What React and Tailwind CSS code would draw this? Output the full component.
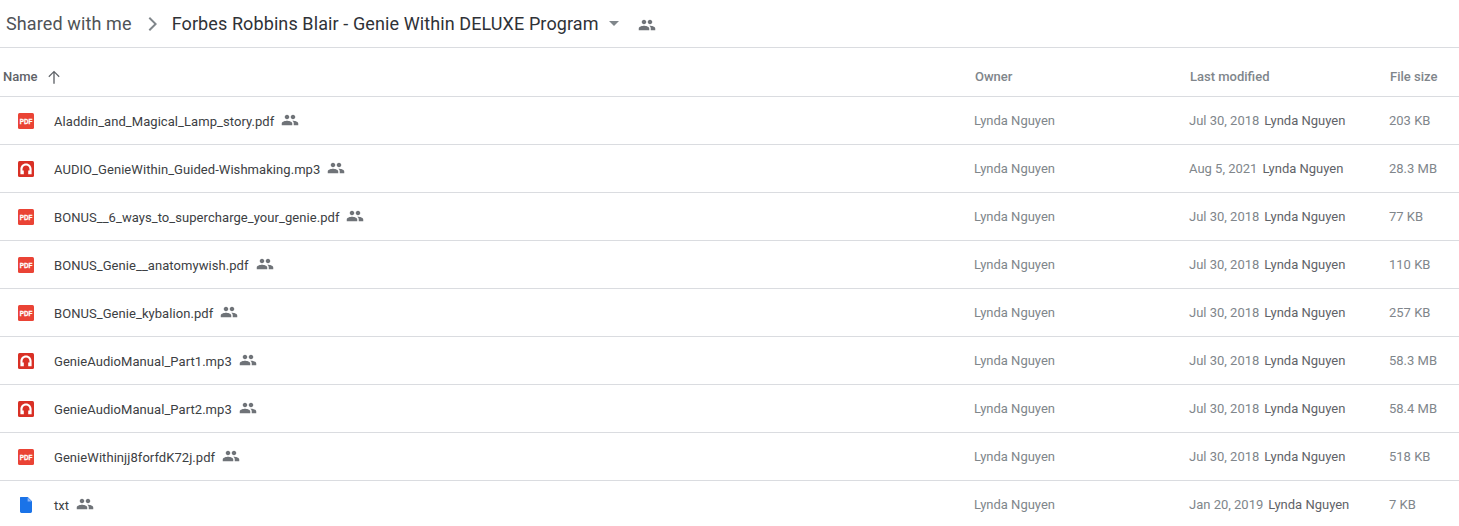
const PEOPLE = "M16 11c1.66 0 2.99-1.34 2.99-3S17.66 5 16 5s-3 1.34-3 3 1.34 3 3 3zm-8 0c1.66 0 2.99-1.34 2.99-3S9.66 5 8 5 5 6.34 5 8s1.34 3 3 3zm0 2c-2.33 0-7 1.17-7 3.5V19h14v-2.5C15 14.17 10.33 13 8 13zm8 0c-.29 0-.62.02-.97.05 1.16.84 1.97 1.97 1.97 3.45V19h6v-2.5c0-2.33-4.67-3.5-7-3.5z";

function People({ className = "" }) {
  return (
    <svg viewBox="0 0 24 24" className={`w-[18px] h-[18px] shrink-0 fill-[#6f7378] ${className}`}>
      <path d={PEOPLE} />
    </svg>
  );
}

function PdfIcon() {
  return (
    <svg viewBox="0 0 16 16" className="w-4 h-4 overflow-visible">
      <rect width="16" height="16" rx="1.5" fill="#ea4335" />
      <text x="8" y="10.700" textAnchor="middle" textLength="12.500" lengthAdjust="spacingAndGlyphs" fontFamily="Liberation Sans, sans-serif" fontWeight="700" fontSize="7.500" stroke="#fff" strokeWidth="0.3" fill="#fff">PDF</text>
    </svg>
  );
}

function AudioIcon() {
  return (
    <svg viewBox="0 0 16 16" className="w-4 h-4">
      <rect width="16" height="16" rx="1.5" fill="#d93025" />
      <path d="M8 2.400C4.800 2.400 2.400 4.800 2.400 8.200V13.200H5.800V9.400H4.500V8.200C4.500 6 6 4.500 8 4.500s3.500 1.500 3.500 3.700v1.200H10.200v3.800h3.400V8.200C13.600 4.800 11.200 2.400 8 2.400z" fill="#fff" />
    </svg>
  );
}

function DocIcon() {
  return (
    <svg viewBox="0 0 16 16" className="w-4 h-4">
      <path d="M2.500 0H9.800L14 4.200V14.600A1.400 1.400 0 0 1 12.600 16H3.400A1.400 1.400 0 0 1 2 14.600V0.800A.8.8 0 0 1 2.500 0Z" fill="#1a73e8" />
      <path d="M9.600 0.400V4.400H13.600Z" fill="#8ab4f8" />
    </svg>
  );
}

const ICONS = { pdf: PdfIcon, audio: AudioIcon, doc: DocIcon };

const FILES = [
  ["pdf", "Aladdin_and_Magical_Lamp_story.pdf", "Jul 30, 2018", "203 KB"],
  ["audio", "AUDIO_GenieWithin_Guided-Wishmaking.mp3", "Aug 5, 2021", "28.3 MB"],
  ["pdf", "BONUS__6_ways_to_supercharge_your_genie.pdf", "Jul 30, 2018", "77 KB"],
  ["pdf", "BONUS_Genie__anatomywish.pdf", "Jul 30, 2018", "110 KB"],
  ["pdf", "BONUS_Genie_kybalion.pdf", "Jul 30, 2018", "257 KB"],
  ["audio", "GenieAudioManual_Part1.mp3", "Jul 30, 2018", "58.3 MB"],
  ["audio", "GenieAudioManual_Part2.mp3", "Jul 30, 2018", "58.4 MB"],
  ["pdf", "GenieWithinjj8forfdK72j.pdf", "Jul 30, 2018", "518 KB"],
  ["doc", "txt", "Jan 20, 2019", "7 KB"],
];

function Row({ kind, name, date, size }) {
  const Icon = ICONS[kind];
  return (
    <div className="flex items-center h-12 border-b border-[#dadce0] text-[13px] shrink-0">
      <div className="w-[974px] flex items-center shrink-0">
        <div className="w-[54px] pl-[18px] flex items-center">
          <Icon />
        </div>
        <span className="mt-[2px] text-[#3c4043] tracking-[0.06px]">{name}</span>
        <People className="ml-[7px] -mt-px" />
      </div>
      <div className="w-[215px] shrink-0 text-[#80868b]">Lynda Nguyen</div>
      <div className="w-[200px] shrink-0 flex gap-[5px]">
        <span className="text-[#80868b]">{date}</span>
        <span className="text-[#5f6368]">Lynda Nguyen</span>
      </div>
      <div className="text-[#80868b]">{size}</div>
    </div>
  );
}

export default function App() {
  return (
    <div className="h-[526px] w-[1459px] overflow-hidden bg-white font-['Roboto',sans-serif]">
      <div className="h-12 flex items-center border-b border-[#dadce0] pl-[6px]">
        <span className="text-[18px] tracking-[0.12px] text-[#4f5357]">Shared with me</span>
        <svg viewBox="0 0 24 24" className="w-6 h-6 ml-2 fill-[#80868b]">
          <path d="M8.600 6.400 10 5l7 7-7 7-1.400-1.400L14.200 12z" />
        </svg>
        <span className="ml-[8px] text-[18px] tracking-[0.1px] text-[#2f3237]">Forbes Robbins Blair - Genie Within DELUXE Program</span>
        <svg viewBox="0 0 10 5" className="w-[10px] h-[5px] ml-[10px] fill-[#80868b]">
          <path d="M0 0h10L5 5z" />
        </svg>
        <People className="ml-[19px] mt-[2px]" />
      </div>
      <div className="h-[49px] flex items-center border-b border-[#dadce0] pt-[10px] text-[13px] font-medium text-[#80868b]">
        <div className="w-[975px] flex items-center shrink-0 pl-[3px]">
          <span className="text-[#5f6368]">Name</span>
          <svg viewBox="0 0 24 24" className="w-[18px] h-[18px] ml-[7px] fill-[#5f6368]">
            <path d="M12 3.500 4.500 11l1.200 1.200 5.400-5.400V21h1.800V6.800l5.400 5.400 1.200-1.200z" />
          </svg>
        </div>
        <div className="w-[215px] shrink-0">Owner</div>
        <div className="w-[200px] shrink-0">Last modified</div>
        <div>File size</div>
      </div>
      {FILES.map(([kind, name, date, size]) => (
        <Row key={name} kind={kind} name={name} date={date} size={size} />
      ))}
    </div>
  );
}
